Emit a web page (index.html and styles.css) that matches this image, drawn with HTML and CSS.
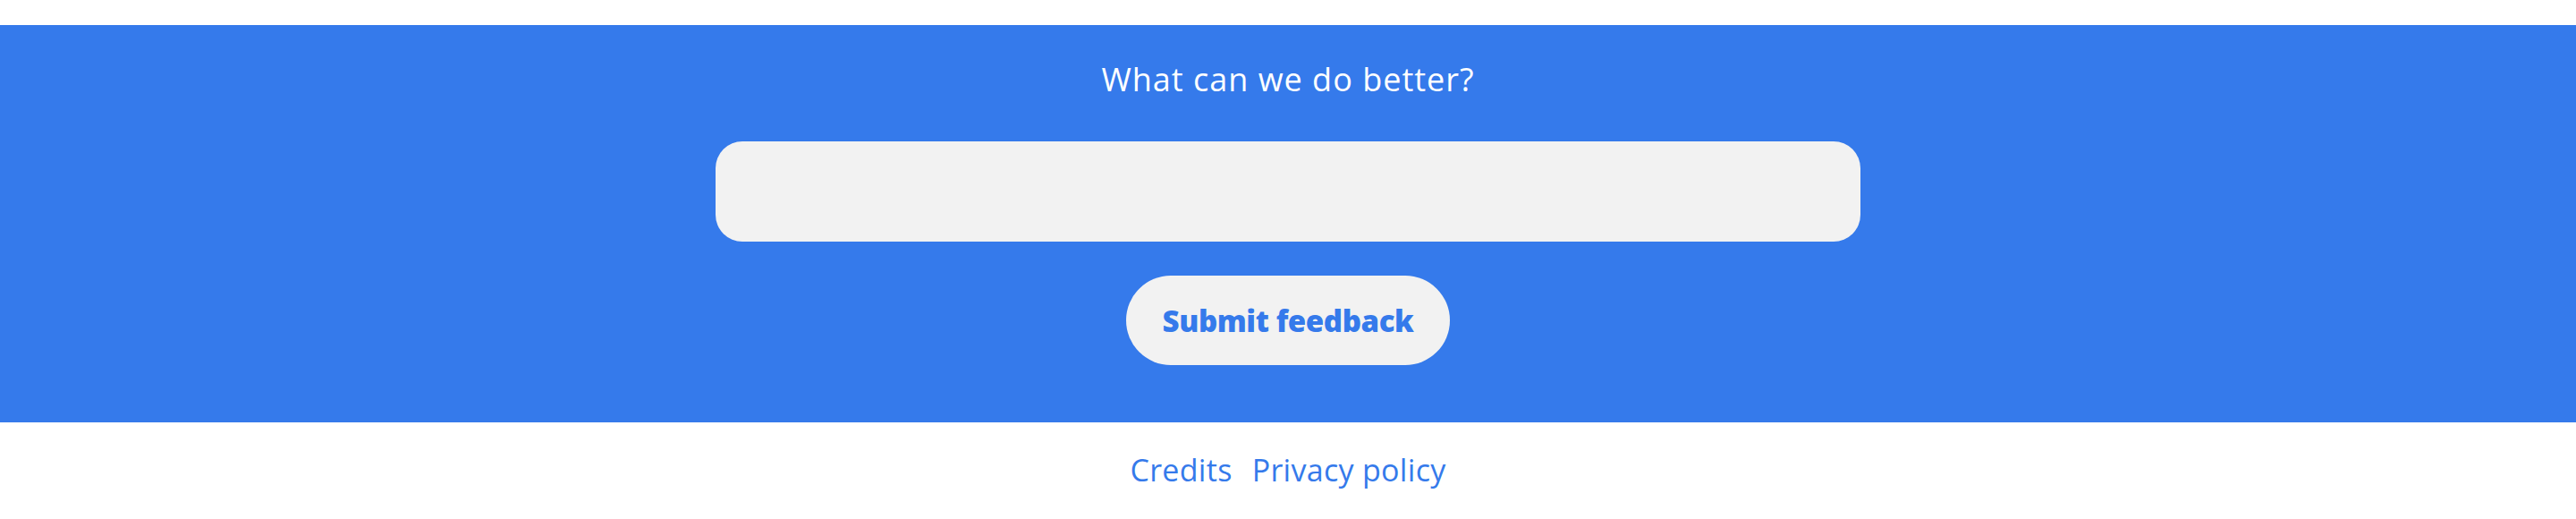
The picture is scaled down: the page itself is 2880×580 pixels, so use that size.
FILE: index.html
```html
<!DOCTYPE html>
<html lang="en">
<head>
<meta charset="utf-8">
<title>Feedback</title>
<link rel="stylesheet" href="styles.css">
</head>
<body>
<div class="page">
  <section class="feedback">
    <h2 class="feedback__title">What can we do better?</h2>
    <form class="feedback__form">
      <textarea class="feedback__input" aria-label="Feedback"></textarea>
      <button type="button" class="feedback__button">Submit feedback</button>
    </form>
  </section>
  <footer class="footer">
    <a class="footer__link" href="#">Credits</a>
    <a class="footer__link" href="#">Privacy policy</a>
  </footer>
</div>
</body>
</html>
```
FILE: styles.css
```css
html, body {
  margin: 0;
  padding: 0;
  background: #ffffff;
}
body {
  font-family: "Open Sans", "Noto Sans", sans-serif;
}
.page {
  padding-top: 28px;
}
.feedback {
  background: #357AEB;
  height: 444px;
  box-sizing: border-box;
  padding-top: 36px;
  display: flex;
  flex-direction: column;
  align-items: center;
}
.feedback__title {
  margin: 0;
  color: #ffffff;
  font-weight: 400;
  font-size: 36px;
  line-height: 50px;
  letter-spacing: 1px;
}
.feedback__form {
  display: flex;
  flex-direction: column;
  align-items: center;
  gap: 38px;
  margin-top: 44px;
}
.feedback__input {
  display: block;
  width: 1280px;
  height: 112px;
  box-sizing: border-box;
  border: none;
  border-radius: 30px;
  background: #F2F2F2;
  resize: none;
  outline: none;
  padding: 20px 30px;
  font-family: inherit;
  font-size: 28px;
}
.feedback__button {
  width: 362px;
  height: 100px;
  border: none;
  border-radius: 50px;
  background: #F2F2F2;
  color: #357AEB;
  font-family: inherit;
  font-weight: 800;
  font-size: 33px;
  letter-spacing: -0.4px;
  cursor: pointer;
  padding: 0;
}
.footer {
  display: flex;
  justify-content: center;
  gap: 22px;
  padding-top: 30px;
}
.footer__link {
  color: #357AEB;
  text-decoration: none;
  font-size: 34px;
  line-height: 46px;
  letter-spacing: 0.3px;
}
```
